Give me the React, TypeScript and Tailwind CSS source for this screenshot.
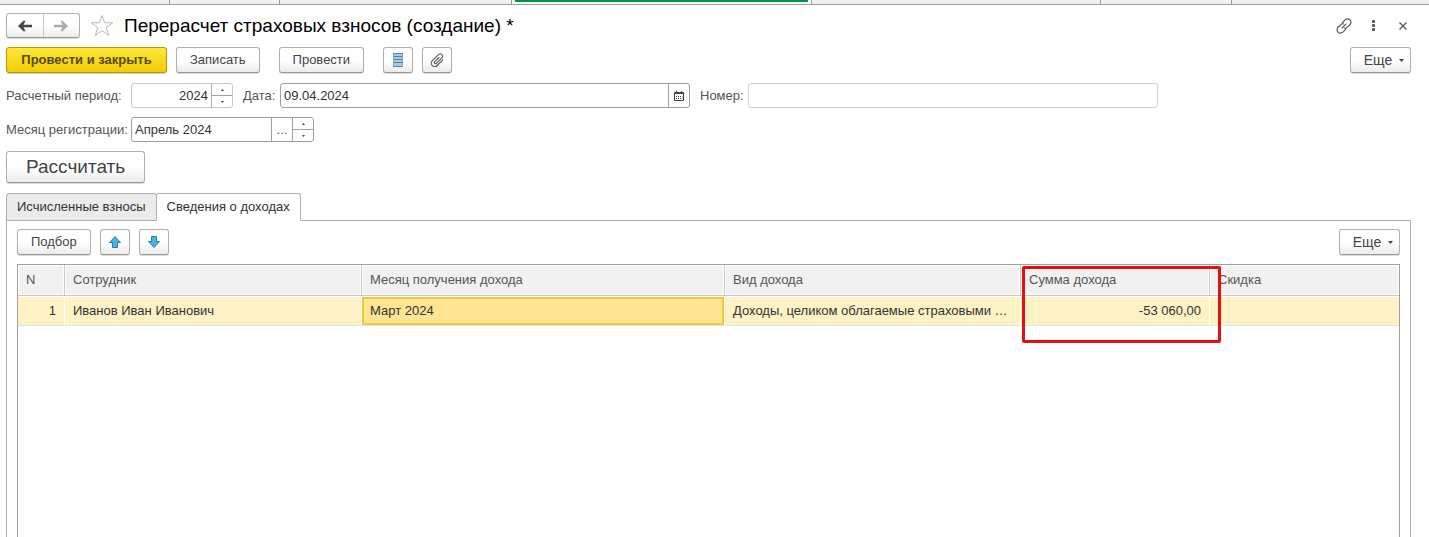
import React, { useState } from 'react';
import clsx from 'clsx';

interface IncomeRow {
  id: number;
  employee: string;
  month: string;
  kind: string;
  amount: string;
  discount: string;
}

const rows: IncomeRow[] = [
  {
    id: 1,
    employee: 'Иванов Иван Иванович',
    month: 'Март 2024',
    kind: 'Доходы, целиком облагаемые страховыми …',
    amount: '-53 060,00',
    discount: '',
  },
];

const windowTabs = [
  { id: 1, width: 'w-[170px]' },
  { id: 2, width: 'w-[110px]' },
  { id: 3, width: 'w-[232px]' },
  { id: 4, width: 'w-[300px]', active: true },
  { id: 5, width: 'w-[289px]' },
  { id: 6, width: 'w-[131px]' },
];

const formTabs = ['Исчисленные взносы', 'Сведения о доходах'];

interface ButtonProps {
  children: React.ReactNode;
  className?: string;
  label?: string;
}

const Button: React.FC<ButtonProps> = ({ children, className = 'h-[26px] px-[13px]', label }) => (
  <button
    type="button"
    aria-label={label}
    className={clsx(
      'flex shrink-0 items-center justify-center whitespace-nowrap rounded-[3px] border border-[#b0b0b0] border-b-[#969696] bg-linear-to-b from-white from-50% to-[#ececec] text-[#444] shadow-[0_1px_1px_rgba(0,0,0,0.15)]',
      className
    )}
  >
    {children}
  </button>
);

const MoreButton = () => (
  <Button className="h-[26px] w-[61px] gap-[7px] pl-[7px] text-sm">
    Еще
    <svg width="5" height="3" viewBox="0 0 5 3" fill="#444">
      <path d="M0 0h5L2.5 3z" />
    </svg>
  </Button>
);

const Spinner: React.FC<{ muted?: boolean }> = ({ muted }) => (
  <div className={clsx('flex w-[21px] shrink-0 flex-col border-l', muted ? 'border-[#b0b0b0]' : 'border-[#a0a0a0]')}>
    <button type="button" aria-label="Увеличить" className="flex flex-1 items-center justify-center border-b border-[#a0a0a0]">
      <svg width="3" height="2" viewBox="0 0 3 2" fill="#444">
        <path d="M0 2h3L1.5 0z" />
      </svg>
    </button>
    <button type="button" aria-label="Уменьшить" className="flex flex-1 items-center justify-center">
      <svg width="3" height="2" viewBox="0 0 3 2" fill="#444">
        <path d="M0 0h3L1.5 2z" />
      </svg>
    </button>
  </div>
);

const NavArrow: React.FC<{ color: string; back?: boolean }> = ({ color, back }) => (
  <svg width="14" height="12" viewBox="0 0 14 12" fill={color}>
    {back ? (
      <path d="M0 6 5.500 .8H7.500L5.500 4.800H14v2.400H5.500L7.500 11.200H5.500z" />
    ) : (
      <path d="M14 6 8.500 .8H6.500L8.500 4.800H0v2.400h8.500L6.500 11.200h2z" />
    )}
  </svg>
);

const MoveArrow: React.FC<{ down?: boolean }> = ({ down }) => (
  <svg width="12" height="12" viewBox="0 0 12 12" fill="#4db1e8" stroke="#2c7cab" strokeLinejoin="round">
    {down ? <path d="M3.5.5h5v5h3L6 11.5.5 5.5h3z" /> : <path d="M6 .5l5.5 6h-3v5h-5v-5h-3z" />}
  </svg>
);

const LinkIcon = () => (
  <svg width="16" height="16" viewBox="0 0 16 16" fill="none" stroke="#555" strokeWidth="1.2" strokeLinecap="round">
    <path d="M6.200 4.800 8.800 2.200C10.300.7 12.500.3 13.900 1.700c1.600 1.500 1.200 3.900-.2 5.300l-2.200 2.200c-1 1-2 1.200-2.900.9" />
    <path d="M9.800 11.200 7.200 13.800c-1.500 1.500-3.700 1.900-5.100.5C.5 12.800.9 10.400 2.300 9l2.200-2.200c1-1 2-1.200 2.900-.9" />
    <path d="M6.200 9.800l3.600-3.600" />
  </svg>
);

const ClipIcon = () => (
  <svg width="14" height="14" viewBox="0 0 14 14" fill="none" stroke="#555" strokeWidth="1.1" strokeLinecap="round">
    <path d="M9 4.500 4.800 8.700c-1.100 1.100.5 2.700 1.600 1.600l5.400-5.400c2.300-2.300-1-5.600-3.300-3.300L2.400 7.700c-3.300 3.300 1.500 8.100 4.800 4.800l5.600-5.600" />
  </svg>
);

const ListIcon = () => (
  <svg width="10" height="14" viewBox="0 0 10 14">
    <path d="M0 0h10v14H0z" fill="#a9cbe3" />
    <path d="M0 .5h10M0 3.500h10M0 6.500h10M0 9.500h10M0 13.500h10" stroke="#557f9e" />
    <path d="M.5 0v14M9.500 0v14" stroke="#7fa3bd" />
  </svg>
);

const CalendarIcon = () => (
  <svg width="10" height="10" viewBox="0 0 10 10" fill="none" stroke="#444">
    <path d="M.5 1.500h9v8h-9z" />
    <path d="M0 2.500h10M2.500 0v2M7.500 0v2" />
    <path d="M2 5.500h1m1 0h1m1 0h1m1 0h.5M2 7.500h1m1 0h1m1 0h1m1 0h.5" />
  </svg>
);

const headCell = 'border-r border-b border-[#c8c8c8] px-2 text-left font-normal shadow-[inset_0_0_0_1px_#fff]';
const bodyCell = 'truncate border-r border-white px-2';

export default function App() {
  const [activeTab, setActiveTab] = useState(1);

  return (
    <div className="flex min-h-screen flex-col bg-white font-['Liberation_Sans',Arial,sans-serif] text-[13px] leading-5 text-[#333]">
      {/* Open windows strip */}
      <div className="flex h-[5px] border-b border-[#a0a0a0] bg-[#f0f0f0]">
        {windowTabs.map((tab) => (
          <div key={tab.id} className={clsx('border-r border-[#a0a0a0]', tab.width, tab.active && 'bg-white px-[3px]')}>
            {tab.active && <div className="h-0.5 bg-[#009646]" />}
          </div>
        ))}
      </div>

      <div className="flex flex-1 flex-col pt-2 pr-[18px] pl-1.5">
        {/* Title */}
        <header className="flex h-[25px] items-center">
          <div className="flex h-[25px] w-[74px] rounded-[3px] border border-[#b0b0b0] border-b-[#969696] bg-linear-to-b from-white from-50% to-[#ececec] shadow-[0_1px_1px_rgba(0,0,0,0.15)]">
            <button type="button" aria-label="Назад" className="flex flex-1 items-center justify-center border-r border-[#c8c8c8]">
              <NavArrow color="#444" back />
            </button>
            <button type="button" aria-label="Вперед" className="flex flex-1 items-center justify-center">
              <NavArrow color="#aaa" />
            </button>
          </div>
          <button type="button" aria-label="В избранное" className="ml-[10px]">
            <svg width="24" height="23" viewBox="0 0 24 23" fill="none" stroke="#b4b8bc">
              <path d="M12 1.500l2.700 7.300h8l-6.400 4.800 2.400 7.900L12 16.800l-6.700 4.700 2.400-7.900L1.300 8.800h8z" />
            </svg>
          </button>
          <h1 className="ml-[10px] text-[19px] text-black">Перерасчет страховых взносов (создание) *</h1>
          <div className="ml-auto flex items-center">
            <button type="button" aria-label="Получить ссылку">
              <LinkIcon />
            </button>
            <button type="button" aria-label="Дополнительно" className="ml-5">
              <svg width="3" height="11" viewBox="0 0 3 11" fill="#555">
                <rect width="3" height="3" rx="1" />
                <rect y="4" width="3" height="3" rx="1" />
                <rect y="8" width="3" height="3" rx="1" />
              </svg>
            </button>
            <button type="button" aria-label="Закрыть" className="mr-1 ml-6">
              <svg width="8" height="8" viewBox="0 0 8 8" stroke="#555" strokeWidth="1.200">
                <path d="M.5.5l7 7M7.500.5l-7 7" />
              </svg>
            </button>
          </div>
        </header>

        {/* Commands */}
        <div className="mt-[9px] flex items-center">
          <button
            type="button"
            className="h-[26px] w-[161px] rounded-[3px] border border-[#b09a00] bg-linear-to-b from-[#ffe733] to-[#f2cd00] font-bold whitespace-nowrap text-[#554a00] shadow-[0_1px_1px_rgba(0,0,0,0.2)]"
          >
            Провести и закрыть
          </button>
          <div className="ml-[9px] flex">
            <Button>Записать</Button>
          </div>
          <div className="ml-[19px] flex">
            <Button>Провести</Button>
          </div>
          <div className="ml-[19px] flex gap-[9px]">
            <Button className="h-[26px] w-[30px]" label="Движения документа">
              <ListIcon />
            </Button>
            <Button className="h-[26px] w-[30px]" label="Присоединенные файлы">
              <ClipIcon />
            </Button>
          </div>
          <div className="ml-auto">
            <MoreButton />
          </div>
        </div>

        {/* Document fields */}
        <div className="mt-[10px] flex items-center text-[#555]">
          <label htmlFor="period" className="w-[125px] shrink-0 whitespace-nowrap">
            Расчетный период:
          </label>
          <div className="flex h-[25px] w-[102px] shrink-0 rounded-[3px] border border-[#c8c8c8]">
            <input id="period" defaultValue="2024" className="w-0 flex-1 px-[3px] text-right text-[#333] outline-none" />
            <Spinner muted />
          </div>
          <label htmlFor="date" className="ml-[10px] w-[37px] shrink-0">
            Дата:
          </label>
          <div className="flex h-[25px] max-w-[410px] flex-1 rounded-[3px] border border-[#a0a0a0]">
            <input id="date" defaultValue="09.04.2024" className="w-0 flex-1 px-[3px] text-[#333] outline-none" />
            <button type="button" aria-label="Выбрать дату" className="flex w-[21px] items-center justify-center border-l border-[#a0a0a0]">
              <CalendarIcon />
            </button>
          </div>
          <label htmlFor="number" className="ml-[10px] w-12 shrink-0">
            Номер:
          </label>
          <input id="number" className="h-[25px] w-0 max-w-[410px] flex-1 rounded-[3px] border border-[#d0d0d0] px-[3px] outline-none" />
        </div>

        <div className="mt-[9px] flex items-center text-[#555]">
          <label htmlFor="month" className="w-[125px] shrink-0 whitespace-nowrap">
            Месяц регистрации:
          </label>
          <div className="flex h-[25px] w-[183px] rounded-[3px] border border-[#a0a0a0]">
            <input id="month" defaultValue="Апрель 2024" className="w-0 flex-1 px-[3px] text-[#333] outline-none" />
            <button type="button" aria-label="Выбрать месяц" className="w-[21px] border-l border-[#a0a0a0]">
              ...
            </button>
            <Spinner />
          </div>
        </div>

        <div className="mt-[9px] flex">
          <Button className="h-8 px-[19px] text-[19px]">Рассчитать</Button>
        </div>

        {/* Tabs */}
        <div role="tablist" className="relative z-10 mt-[10px] -mb-px flex">
          {formTabs.map((title, index) => (
            <button
              key={title}
              type="button"
              role="tab"
              aria-selected={activeTab === index}
              onClick={() => setActiveTab(index)}
              className={clsx(
                'h-7 rounded-t-[3px] border border-[#b0b0b0] px-[10px] whitespace-nowrap not-first:-ml-px',
                activeTab === index ? 'border-b-white bg-white' : 'bg-[#ebebeb]'
              )}
            >
              {title}
            </button>
          ))}
        </div>

        <section className="flex flex-1 flex-col border-x border-t border-[#b0b0b0] px-[10px] pt-2">
          <div className="flex items-center gap-[9px]">
            <Button>Подбор</Button>
            <Button className="h-[26px] w-[30px]" label="Переместить вверх">
              <MoveArrow />
            </Button>
            <Button className="h-[26px] w-[30px]" label="Переместить вниз">
              <MoveArrow down />
            </Button>
            <div className="ml-auto">
              <MoreButton />
            </div>
          </div>

          <div className="mt-[9px] flex-1 border-x border-t border-[#a0a0a0]">
            <table className="w-full table-fixed border-separate border-spacing-0">
              <colgroup>
                <col className="w-[47px]" />
                <col className="w-[297px]" />
                <col className="w-[363px]" />
                <col className="w-[296px]" />
                <col className="w-[189px]" />
                <col />
              </colgroup>
              <thead className="bg-[#f1f1f1] text-[#555]">
                <tr className="h-[31px]">
                  <th className={headCell}>N</th>
                  <th className={headCell}>Сотрудник</th>
                  <th className={headCell}>Месяц получения дохода</th>
                  <th className={headCell}>Вид дохода</th>
                  <th className={clsx(headCell, 'relative')}>
                    Сумма дохода
                    {/* Marker around the amount column */}
                    <div className="pointer-events-none absolute top-px -right-3 left-px z-10 h-[77px] rounded-[2px] border-3 border-[#e60f0f]" />
                  </th>
                  <th className={clsx(headCell, 'border-r-0')}>Скидка</th>
                </tr>
              </thead>
              <tbody>
                {rows.map((row) => (
                  <tr key={row.id} className="h-[30px] bg-[#fdf1c6] text-[#333] *:border-y *:border-t-white *:border-b-[#e4e4e4]">
                    <td className={clsx(bodyCell, 'text-right')}>{row.id}</td>
                    <td className={bodyCell}>{row.employee}</td>
                    <td className={clsx(bodyCell, 'bg-[#fee591] shadow-[inset_0_0_0_2px_#f0c838]')}>{row.month}</td>
                    <td className={bodyCell}>{row.kind}</td>
                    <td className={clsx(bodyCell, 'text-right')}>{row.amount}</td>
                    <td className="truncate px-2">{row.discount}</td>
                  </tr>
                ))}
              </tbody>
            </table>
          </div>
        </section>
      </div>
    </div>
  );
}
